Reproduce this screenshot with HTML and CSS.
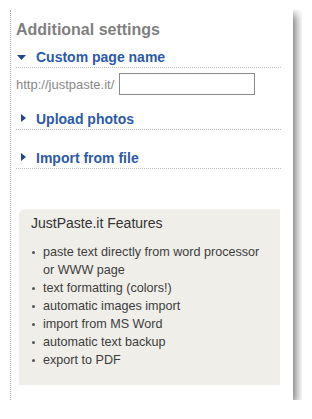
FILE: index.html
```html
<!DOCTYPE html>
<html lang="en">
<head>
  <meta charset="UTF-8">
  <title>Additional settings</title>
  <link rel="stylesheet" href="styles.css">
</head>
<body>

<div class="panel">
  <h2 class="title">Additional settings</h2>

  <h3 class="toggle">
    <svg class="arrow" width="20" height="17" viewBox="0 0 20 17"><polygon points="1,6 10,6 5.5,11" /></svg>
    Custom page name
  </h3>
  <div class="url-row">
    <label for="pagename">http://justpaste.it/</label>
    <input type="text" id="pagename">
  </div>

  <h3 class="toggle gap-upload">
    <svg class="arrow" width="20" height="17" viewBox="0 0 20 17"><polygon points="5,3 10,7 5,11" /></svg>
    Upload photos
  </h3>

  <h3 class="toggle gap-import">
    <svg class="arrow" width="20" height="17" viewBox="0 0 20 17"><polygon points="5,3 10,7 5,11" /></svg>
    Import from file
  </h3>

  <div class="features">
    <h4>JustPaste.it Features</h4>
    <ul>
      <li>paste text directly from word processor or WWW page</li>
      <li>text formatting (colors!)</li>
      <li>automatic images import</li>
      <li>import from MS Word</li>
      <li>automatic text backup</li>
      <li>export to PDF</li>
    </ul>
  </div>
</div>

</body>
</html>
```

FILE: styles.css
```css
body { margin: 10px; background: #fff; font-family: "Liberation Sans", Arial, sans-serif; }
.panel { width: 265px; height: 365px; padding: 11px 12px 14px 5px; background: #fff; border-left: 1px dotted #aaa; box-shadow: 3px 4px 9px rgba(0, 0, 0, 0.55); }
.title { margin: 0; font-size: 16px; line-height: 18px; font-weight: bold; color: #7f7f7f; }
.toggle { display: flex; margin: 10px 0 0; padding-bottom: 1px; font-size: 14px; line-height: 17px; font-weight: bold; color: #2b5aa8; border-bottom: 1px dotted #bbb; }
.toggle .arrow { flex: none; fill: #1f4596; }
.gap-upload { margin-top: 16px; }
.gap-import { margin-top: 20px; }
.url-row { display: flex; align-items: center; gap: 5px; margin-top: 5px; font-size: 13px; color: #888; }
.url-row input { width: 130px; height: 16px; padding: 2px; margin: 0; border: 1px solid #8a8a8a; font-size: 13px; }
.features { margin: 40px 1px 0 3px; padding: 6px 12px 16px 12px; background: #efeee9; border-top-left-radius: 6px; }
.features h4 { margin: 0; font-size: 14px; line-height: 16px; font-weight: normal; color: #333; }
.features ul { margin: 12px 0 0; padding: 0 0 0 1px; list-style: none; font-size: 12.6px; line-height: 18px; color: #3d3d3d; }
.features li { display: flex; }
.features li::before { content: ""; flex: none; width: 3px; height: 3px; margin: 8px 8px 0 0; border-radius: 50%; background: #555; }
```
